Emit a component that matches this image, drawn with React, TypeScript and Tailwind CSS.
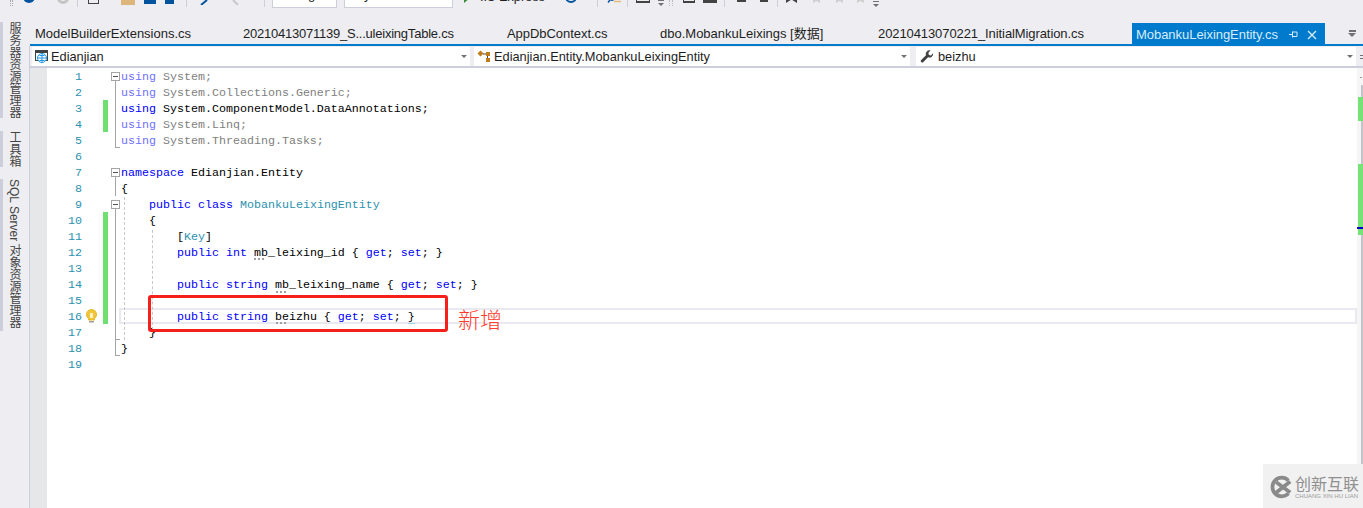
import type { ReactNode } from "react";

type Tok = [string, string];

const KW = "text-[#0000ff]";
const TY = "text-[#2b91af]";
const TX = "text-black";
const DIM_KW = "text-[#7070ff]";
const DIM = "text-[#808080]";

type Row = {
  green?: boolean;
  fold?: "open" | "line" | "end" | "none";
  toks: Tok[];
  hint?: string;
  bulb?: boolean;
};

const rows: Row[] = [
  { fold: "open", toks: [[DIM_KW, "using"], [DIM, " System;"]] },
  { fold: "line", toks: [[DIM_KW, "using"], [DIM, " System.Collections.Generic;"]] },
  { fold: "line", green: true, toks: [[KW, "using"], [TX, " System.ComponentModel.DataAnnotations;"]] },
  { fold: "line", green: true, toks: [[DIM_KW, "using"], [DIM, " System.Linq;"]] },
  { fold: "end", toks: [[DIM_KW, "using"], [DIM, " System.Threading.Tasks;"]] },
  { fold: "none", toks: [] },
  { fold: "open", toks: [[KW, "namespace"], [TX, " Edianjian.Entity"]] },
  { fold: "line", toks: [[TX, "{"]] },
  { fold: "open", toks: [[TX, "    "], [KW, "public class"], [TX, " "], [TY, "MobankuLeixingEntity"]] },
  { fold: "line", green: true, toks: [[TX, "    {"]] },
  { fold: "line", green: true, toks: [[TX, "        ["], [TY, "Key"], [TX, "]"]] },
  {
    fold: "line",
    green: true,
    hint: "left-[207px] top-[14px]",
    toks: [[TX, "        "], [KW, "public int"], [TX, " mb_leixing_id { "], [KW, "get"], [TX, "; "], [KW, "set"], [TX, "; }"]],
  },
  { fold: "line", green: true, toks: [] },
  {
    fold: "line",
    green: true,
    hint: "left-[229px] top-[15px]",
    toks: [[TX, "        "], [KW, "public string"], [TX, " mb_leixing_name { "], [KW, "get"], [TX, "; "], [KW, "set"], [TX, "; }"]],
  },
  { fold: "line", green: true, toks: [] },
  {
    fold: "line",
    green: true,
    bulb: true,
    hint: "left-[229px] top-[14px]",
    toks: [[TX, "        "], [KW, "public string"], [TX, " beizhu { "], [KW, "get"], [TX, "; "], [KW, "set"], [TX, "; }"]],
  },
  { fold: "end", toks: [[TX, "    }"]] },
  { fold: "end", toks: [[TX, "}"]] },
  { fold: "none", toks: [] },
];

const tabs = [
  { name: "ModelBuilderExtensions.cs", cls: "w-[208px]" },
  { name: "20210413071139_S...uleixingTable.cs", cls: "w-[264px] tracking-[-0.23px]" },
  { name: "AppDbContext.cs", cls: "w-[153px] tracking-[-0.05px]" },
  { name: "dbo.MobankuLeixings [数据]", cls: "w-[218px]" },
  { name: "20210413070221_InitialMigration.cs", cls: "w-[259px] tracking-[-0.09px]" },
];

const tools = [
  { label: "服务器资源管理器", cls: "h-[96px]" },
  { label: "工具箱", cls: "mt-[13px] h-[36px]" },
  { label: "SQL Server 对象资源管理器", cls: "mt-[12px] h-[152px]" },
];

function Caret() {
  return <span className="h-0 w-0 border-x-[3px] border-t-[3px] border-x-transparent border-t-[#717171]" />;
}

function NavCombo({ cls, iconCls, icon, label }: { cls: string; iconCls: string; icon: ReactNode; label: string }) {
  return (
    <div className={`flex h-[19px] items-center bg-white ${cls}`}>
      <span className={`flex shrink-0 justify-center ${iconCls}`}>{icon}</span>
      <span className="flex-1 truncate text-[12.8px] text-[#1e1e1e]">{label}</span>
      <span className="mr-[3px] flex w-[6px]">
        <Caret />
      </span>
    </div>
  );
}

function FoldCell({ fold }: { fold?: Row["fold"] }) {
  return (
    <div className="relative h-4 w-[12px] shrink-0">
      {fold === "open" && (
        <>
          <div className="absolute left-[3px] top-[4px] flex h-[9px] w-[9px] items-center justify-center border border-[#a5a5a5] bg-white">
            <span className="h-px w-[5px] bg-[#555555]" />
          </div>
          <span className="absolute left-[7px] top-[13px] h-[3px] w-px bg-[#a5a5a5]" />
        </>
      )}
      {fold === "line" && <span className="absolute left-[7px] top-0 h-4 w-px bg-[#a5a5a5]" />}
      {fold === "end" && (
        <>
          <span className="absolute left-[7px] top-0 h-4 w-px bg-[#a5a5a5]" />
          <span className="absolute left-[7px] top-[15px] h-px w-[5px] bg-[#a5a5a5]" />
        </>
      )}
    </div>
  );
}

function Sep({ cls }: { cls: string }) {
  return <span className={`mb-px h-[8px] w-px shrink-0 bg-[#cccedb] ${cls}`} />;
}

// only the bottom few pixels of the toolbar are in the shot, the row overflows upward and gets clipped
function Toolbar() {
  return (
    <div className="h-[22px] shrink-0 overflow-hidden">
      <div className="flex h-[8px] items-end text-[13px] leading-[16px] text-[#1e1e1e]">
        <span className="mb-[2px] ml-[10px] h-[6px] w-[3px] shrink-0 border-x border-dotted border-[#aaaaaa]" />
        <span className="mb-[5px] ml-[10px] h-[12px] w-[12px] shrink-0 rounded-full bg-[#00539c]" />
        <span className="mb-[4px] ml-[22px] h-[12px] w-[12px] shrink-0 rounded-full border-[3px] border-[#c4c4c4]" />
        <Sep cls="ml-[8px]" />
        <span className="mb-[4px] ml-[10px] h-[10px] w-[11px] shrink-0 border border-[#424242]" />
        <span className="mb-[3px] ml-[22px] h-[10px] w-[14px] shrink-0 bg-[#dcb67a]" />
        <span className="mb-[4px] ml-[9px] h-[10px] w-[12px] shrink-0 bg-[#00539c]" />
        <span className="mb-[4px] ml-[9px] h-[10px] w-[9px] shrink-0 bg-[#00539c]" />
        <Sep cls="ml-[12px]" />
        <svg className="mb-[3px] ml-[13px] shrink-0" width="8" height="5" viewBox="0 0 8 5">
          <path d="M1 5 L7 0" stroke="#00539c" strokeWidth="2" fill="none" />
        </svg>
        <svg className="mb-[3px] ml-[24px] shrink-0" width="7" height="5" viewBox="0 0 7 5">
          <path d="M1 0 L6 5" stroke="#c8c8c8" strokeWidth="2" fill="none" />
        </svg>
        <Sep cls="ml-[25px]" />
        <span className="ml-[7px] flex h-[20px] w-[65px] shrink-0 items-end border border-[#cccedb] bg-white pb-[5px] pl-[4px] leading-[14px]">
          Debug
        </span>
        <span className="ml-[7px] flex h-[20px] w-[109px] shrink-0 items-end border border-[#cccedb] bg-white pb-[5px] pl-[3px] leading-[14px]">
          Any CPU
        </span>
        <span className="mb-[5px] ml-[11px] h-0 w-0 shrink-0 border-y-[5px] border-l-[6px] border-y-transparent border-l-[#388a34]" />
        <span className="mb-[4px] ml-[10px] w-[66px] shrink-0 whitespace-nowrap text-[12.7px] leading-[14px]">IIS Express</span>
        <span className="mb-[5px] ml-[19px] h-[12px] w-[12px] shrink-0 rounded-full border-[2px] border-[#00539c]" />
        <Sep cls="ml-[20px]" />
        <svg className="mb-[5px] ml-[9px] shrink-0" width="14" height="8" viewBox="0 0 14 8" fill="none">
          <circle cx="5" cy="3" r="2.5" stroke="#00539c" />
          <path d="M3 5 L1 7.5" stroke="#00539c" strokeWidth="1.5" />
          <path d="M7 6.5H14" stroke="#e8b878" strokeWidth="1.5" />
        </svg>
        <Sep cls="ml-[6px]" />
        <span className="mb-[5px] ml-[8px] h-[8px] w-[14px] shrink-0 border border-[#424242] border-b-2" />
        <span className="ml-[8px] flex w-[6px] shrink-0 flex-col items-center gap-[2px] pb-[2px]">
          <span className="h-px w-[6px] bg-[#717171]" />
          <Caret />
        </span>
        <span className="mb-[2px] ml-[5px] h-[6px] w-[4px] shrink-0 border-x border-dotted border-[#bbbbbb]" />
        <span className="mb-[5px] ml-[10px] h-[8px] w-[12px] shrink-0 border border-[#424242] border-b-2" />
        <span className="ml-[8px] mb-[5px] flex h-[3px] w-[14px] shrink-0 justify-end bg-[#424242]" />
        <Sep cls="ml-[7px]" />
        <span className="mb-[6px] ml-[12px] h-[2px] w-[9px] shrink-0 bg-[#424242]" />
        <span className="mb-[6px] ml-[14px] h-[2px] w-[8px] shrink-0 bg-[#424242]" />
        <Sep cls="ml-[9px]" />
        <svg className="mb-[5px] ml-[8px] shrink-0" width="11" height="6" viewBox="0 0 11 6">
          <path d="M0 0H11V6L5.5 2.5L0 6Z" fill="#424242" />
        </svg>
        <svg className="mb-[5px] ml-[16px] shrink-0" width="7" height="5" viewBox="0 0 7 5">
          <path d="M0 0H7V5L3.5 3L0 5Z" fill="#d0d0d0" />
        </svg>
        <svg className="mb-[5px] ml-[16px] shrink-0" width="7" height="5" viewBox="0 0 7 5">
          <path d="M0 0H7V5L3.5 3L0 5Z" fill="#d0d0d0" />
        </svg>
        <svg className="mb-[5px] ml-[14px] shrink-0" width="7" height="5" viewBox="0 0 7 5">
          <path d="M0 0H7V5L3.5 3L0 5Z" fill="#d0d0d0" />
        </svg>
        <span className="ml-[9px] flex w-[6px] shrink-0 flex-col items-center gap-[2px] pb-[1px]">
          <span className="h-px w-[6px] bg-[#717171]" />
          <Caret />
        </span>
      </div>
    </div>
  );
}

export default function App() {
  return (
    <div className="flex h-[508px] w-[1363px] flex-col overflow-hidden bg-[#eeeef2] font-['Liberation_Sans','Noto_Sans_CJK_SC',sans-serif]">
      <Toolbar />
      <div className="flex min-h-0 flex-1">
        {/* vertical tool windows */}
        <aside className="flex w-[29px] shrink-0 flex-col">
          {tools.map((t) => (
            <div
              key={t.label}
              className={`flex w-[21px] border-l-[3px] border-[#cccedb] text-[12px] leading-[14px] text-[#444444] [writing-mode:vertical-rl] ${t.cls}`}
            >
              {t.label}
            </div>
          ))}
        </aside>

        <main className="flex min-w-0 flex-1 flex-col">
          {/* document tabs */}
          <div className="flex h-[22px] shrink-0 items-end pl-px">
            {tabs.map((t) => (
              <div key={t.name} className={`flex h-[21px] items-center pl-[5px] text-[13px] text-[#1e1e1e] ${t.cls}`}>
                {t.name}
              </div>
            ))}
            <div className="flex h-[21px] w-[193px] items-center bg-[#007acc] pl-[4px] pt-[2px] text-[13px] tracking-[-0.04px] text-[#d6ecfa]">
              <span>MobankuLeixingEntity.cs</span>
              <svg className="ml-[11px]" width="9" height="9" viewBox="0 0 9 9" fill="none" stroke="#d6ecfa">
                <path d="M0 4.5H3M3.5 1.5V7.5M3.5 2H8V6.5H3.5" />
              </svg>
              <svg className="ml-[9px]" width="10" height="10" viewBox="0 0 10 10" fill="none" stroke="#d6ecfa" strokeWidth="1.4">
                <path d="M1 1L9 9M9 1L1 9" />
              </svg>
            </div>
            <div className="flex h-[21px] flex-1 items-center justify-end pr-[7px]">
              <div className="flex flex-col items-center gap-px">
                <span className="h-[2px] w-[7px] bg-[#717171]" />
                <span className="h-0 w-0 border-x-[4px] border-t-[4px] border-x-transparent border-t-[#717171]" />
              </div>
            </div>
          </div>
          <div className="ml-px h-[2px] shrink-0 bg-[#007acc]" />

          <div className="flex min-h-0 flex-1 flex-col border-l border-[#cccedb]">
            {/* navigation bar */}
            <div className="flex h-[22px] shrink-0 border-b-2 border-[#cccedb] pl-[2px] pt-px">
              <NavCombo
                cls="w-[438px]"
                iconCls="w-[19px]"
                label="Edianjian"
                icon={
                  <svg width="14" height="13" viewBox="0 0 14 13" fill="none">
                    <rect x="0.5" y="0.5" width="12" height="10" fill="#fff" stroke="#424242" />
                    <rect x="1" y="1" width="11" height="2" fill="#424242" />
                    <circle cx="7" cy="8" r="4.5" fill="#fff" stroke="#1c97ea" />
                    <path d="M2.5 8H11.5M7 3.5V12.5M4.5 5.5H9.5M4.5 10.5H9.5" stroke="#1c97ea" />
                  </svg>
                }
              />
              <NavCombo
                cls="ml-[4px] w-[436px]"
                iconCls="w-[20px]"
                label="Edianjian.Entity.MobankuLeixingEntity"
                icon={
                  <svg width="15" height="13" viewBox="0 0 15 13" fill="none">
                    <path d="M3.5 0.5L6.5 3.5L3.5 6.5L0.5 3.5Z" fill="#c27d1a" />
                    <path d="M6 4H10.5V9" stroke="#424242" />
                    <rect x="9" y="2" width="4" height="4" fill="#c27d1a" />
                    <rect x="9" y="8" width="4" height="4" fill="#c27d1a" />
                  </svg>
                }
              />
              <NavCombo
                cls="ml-[6px] w-[440px]"
                iconCls="w-[22px]"
                label="beizhu"
                icon={
                  <svg width="14" height="14" viewBox="0 0 14 14" fill="#424242">
                    <path d="M13 3.2a3.6 3.6 0 0 1-4.9 4.1L3.4 12a1.5 1.5 0 0 1-2.2-2.1l4.8-4.7A3.6 3.6 0 0 1 10.6.6L8.4 2.8l.5 2.1 2.1.5Z" />
                  </svg>
                }
              />
              <span className="ml-[4px] flex h-[19px] w-[3px] flex-col justify-center gap-[2px]">
                <span className="h-px w-[3px] bg-[#717171]" />
                <span className="h-px w-[3px] bg-[#717171]" />
              </span>
            </div>

            {/* editor */}
            <div className="flex min-h-0 flex-1">
              <div className="w-[17px] shrink-0 bg-[#e6e7e8]" />
              <div className="relative min-w-0 flex-1 bg-white">
                {/* current line */}
                <div className="absolute left-[72px] right-[6px] top-[240px] h-4 border-2 border-[#e9e9f1]" />
                {rows.map((r, i) => (
                  <div key={i} className="relative flex h-4 items-center">
                    <span className="h-4 w-[35px] shrink-0 self-start pt-px text-right font-['Liberation_Mono',monospace] text-[11.67px] leading-4 text-[#2b91af]">
                      {i + 1}
                    </span>
                    <span className="flex w-[21px] shrink-0 justify-end pr-[6px]">
                      {r.bulb && (
                        <svg width="11" height="14" viewBox="0 0 11 14">
                          <path d="M5.5 0.5a5 5 0 0 1 3 9V11h-6V9.5a5 5 0 0 1 3-9Z" fill="#f2c53d" stroke="#e8b820" />
                          <rect x="4" y="4" width="3" height="5" fill="#fff3c4" />
                          <rect x="3" y="12" width="5" height="1.5" fill="#a0a0a0" />
                        </svg>
                      )}
                    </span>
                    <span className={`h-4 w-[5px] shrink-0 ${r.green ? "bg-[#6fdf6f]" : ""}`} />
                    <FoldCell fold={r.fold} />
                    <pre className="relative h-4 flex-1 pl-px pt-px font-['Liberation_Mono',monospace] text-[11.67px] leading-4">
                      {r.toks.map(([c, t], j) => (
                        <span key={j} className={c}>
                          {t}
                        </span>
                      ))}
                    </pre>
                    {r.hint && <span className={`absolute h-[2px] w-[10px] border-t-2 border-dotted border-[#a0a0a0] ${r.hint}`} />}
                  </div>
                ))}
                {/* smart tag underline, indent guides */}
                <span className="absolute left-[361px] top-[255px] h-px w-[7px] bg-[#9bd3e8]" />
                <span className="absolute left-[77px] top-[129px] h-[143px] border-l border-dashed border-[#c8c8c8]" />
                <span className="absolute left-[105px] top-[162px] h-[100px] border-l border-dashed border-[#c8c8c8]" />
                {/* annotation */}
                <div className="absolute left-[101px] top-[227px] h-[37px] w-[300px] rounded-[3px] border-[3px] border-[#f5201a]" />
                <span className="absolute left-[411px] top-[236px] font-['Noto_Sans_CJK_SC',sans-serif] text-[22px] font-light leading-[28px] text-[#ff3a2e]">
                  新增
                </span>
                {/* scrollbar with change marks */}
                <div className="absolute bottom-0 right-0 top-0 w-[6px] bg-[#f5f5f5]">
                  <div className="absolute left-[3px] top-[9px] h-px w-[2px] bg-[#999999]" />
                  <div className="absolute bottom-0 right-0 top-[17px] w-[2px] bg-[#c2c3c9]" />
                  <div className="absolute right-0 top-[29px] h-[24px] w-[5px] bg-[#77e277]" />
                  <div className="absolute right-0 top-[96px] h-[71px] w-[5px] bg-[#77e277]" />
                  <div className="absolute right-0 top-[159px] h-[2px] w-[6px] bg-[#0000cc]" />
                </div>
                {/* watermark */}
                <div className="absolute bottom-0 right-0 flex h-[44px] w-[100px] items-center gap-[2px] bg-[#f1f1f1] pl-[4px] pt-[2px]">
                  <svg width="26" height="24" viewBox="0 0 28 24" fill="none">
                    <path d="M23 5A10 10 0 1 0 23 19" stroke="#8a8a8a" strokeWidth="4" />
                    <path d="M10 7L25 18M25 6L10 18" stroke="#8a8a8a" strokeWidth="4" />
                  </svg>
                  <div className="flex flex-col">
                    <span className="font-['Noto_Sans_CJK_SC',sans-serif] text-[16px] leading-[16px] text-[#8f8f8f]">创新互联</span>
                    <span className="mt-[2px] whitespace-nowrap text-[6px] leading-[6px] text-[#9a9a9a]">CHUANG XIN HU LIAN</span>
                  </div>
                </div>
              </div>
            </div>
          </div>
        </main>
      </div>
    </div>
  );
}
